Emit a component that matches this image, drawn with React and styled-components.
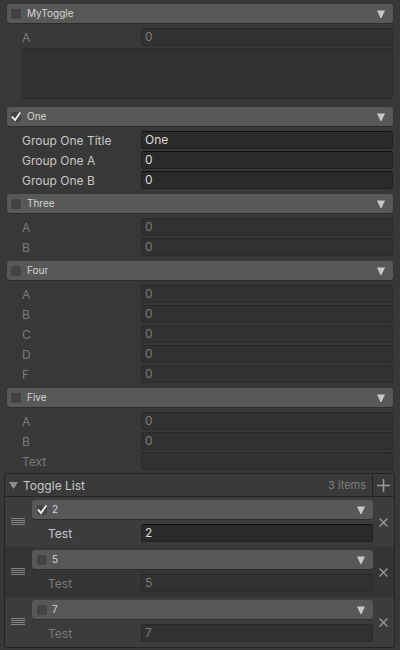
import React from 'react'
import styled, { createGlobalStyle } from "styled-components";

const GlobalStyle = createGlobalStyle`
  html, body {
    margin: 0;
    padding: 0;
    background: #383838;
    font-family: Inter, "Noto Sans", sans-serif;
  }
`;

const Page = styled.div`
  padding: 4px 7px 0 7px;
  width: 400px;
  height: 650px;
  box-sizing: border-box;
  background: #383838;
  overflow: hidden;
`;

const FoldHeader = styled.div`
  display: flex;
  align-items: center;
  height: 19px;
  padding: 0 8px 0 4px;
  background: #585858;
  border-radius: 3px;
  box-shadow: 0 1px 0 #2c2c2c;
`;

const CheckBox = styled.span`
  width: 10px;
  height: 10px;
  border-radius: 2px;
  background: #434343;
  display: flex;
  align-items: center;
  justify-content: center;
  flex-shrink: 0;
`;

const HeaderLabel = styled.span`
  flex: 1;
  margin-left: ${p => p.$gap || 6}px;
  font-size: 10px;
  color: #d4d4d4;
  line-height: 19px;
`;

const Body = styled.div`
  padding: 5px 0 3px 15px;
`;

const Row = styled.div`
  display: flex;
  align-items: center;
  height: 18px;
  margin-bottom: 2px;
`;

const Label = styled.span`
  width: ${p => p.$width || 119}px;
  flex-shrink: 0;
  font-size: 12px;
  color: ${p => (p.$on ? "#c8c8c8" : "#7a7a7a")};
`;

const Field = styled.div`
  flex: 1;
  height: 18px;
  box-sizing: border-box;
  border-radius: 3px;
  padding-left: 3px;
  font-size: 12px;
  line-height: 16px;
  background: ${p => (p.$on ? "#2a2a2a" : "#313131")};
  border: 1px solid ${p => (p.$on ? "#212121" : "#2b2b2b")};
  border-top-color: ${p => (p.$on ? "#0f0f0f" : "#282828")};
  color: ${p => (p.$on ? "#dcdcdc" : "#7c7c7c")};
`;

const TextArea = styled.div`
  height: 51px;
  margin-bottom: 5px;
  box-sizing: border-box;
  border-radius: 3px;
  background: #313131;
  border: 1px solid #2b2b2b;
`;

const ListBox = styled.div`
  margin: -2px -2px 0 -3px;
  border: 1px solid #242424;
  border-radius: 2px;
`;

const ListHeader = styled.div`
  display: flex;
  align-items: center;
  height: 22px;
  border-bottom: 1px solid #242424;
  background: #3a3a3a;
`;

const ListTitle = styled.span`
  flex: 1;
  margin-left: 5px;
  font-size: 12px;
  color: #c8c8c8;
`;

const ItemCount = styled.span`
  font-size: 11px;
  color: #7e7e7e;
  margin-right: 6px;
`;

const AddButton = styled.div`
  width: 21px;
  height: 22px;
  border-left: 1px solid #242424;
  display: flex;
  align-items: center;
  justify-content: center;
`;

const Element = styled.div`
  display: flex;
  height: 50px;
  background: ${p => (p.$alt ? "#353535" : "#3c3c3c")};
`;

const Handle = styled.div`
  width: 27px;
  flex-shrink: 0;
  display: flex;
  align-items: center;
  padding-left: 6px;
  box-sizing: border-box;
`;

const ElementBody = styled.div`
  flex: 1;
  padding-top: 3px;
`;

const InnerHeader = styled(FoldHeader)`
  padding-left: 5px;
  margin-bottom: 5px;
`;

const InnerRow = styled(Row)`
  padding-left: 16px;
`;

const Remove = styled.div`
  width: 21px;
  flex-shrink: 0;
  display: flex;
  align-items: center;
  justify-content: center;
`;

const Check = () => (
  <svg width="10" height="10" viewBox="0 0 10 10">
    <polyline points="1.5,5.2 4,8 8.8,1.2" fill="none" stroke="#f0f0f0" strokeWidth="1.8" strokeLinecap="square" />
  </svg>
);

const DropArrow = () => (
  <svg width="8" height="8" viewBox="0 0 8 8">
    <polygon points="0,0.5 8,0.5 4.5,8 3.5,8" fill="#c8c8c8" />
  </svg>
);

const FoldArrow = () => (
  <svg width="9" height="8" viewBox="0 0 9 8" style={{ marginLeft: 4 }}>
    <polygon points="0,1 9,1 4.5,8" fill="#8e8e8e" />
  </svg>
);

const Plus = () => (
  <svg width="13" height="13" viewBox="0 0 13 13">
    <path d="M6.5 0 V13 M0 6.5 H13" stroke="#9a9a9a" strokeWidth="1.6" />
  </svg>
);

const Cross = () => (
  <svg width="9" height="9" viewBox="0 0 9 9">
    <path d="M0.5 0.5 L8.5 8.5 M8.5 0.5 L0.5 8.5" stroke="#9a9a9a" strokeWidth="1.3" />
  </svg>
);

const Grip = () => (
  <svg width="14" height="8" viewBox="0 0 14 8">
    {[0.5, 2.5, 4.5, 6.5].map(y => (
      <line key={y} x1="0" x2="14" y1={y} y2={y} stroke="#858585" strokeWidth="1" />
    ))}
  </svg>
);

const Header = ({ title, checked }) => (
  <FoldHeader>
    <CheckBox>{checked && <Check />}</CheckBox>
    <HeaderLabel>{title}</HeaderLabel>
    <DropArrow />
  </FoldHeader>
);

const groups = [
  { title: "Three", rows: [["A", "0"], ["B", "0"]] },
  { title: "Four", rows: [["A", "0"], ["B", "0"], ["C", "0"], ["D", "0"], ["F", "0"]] },
  { title: "Five", rows: [["A", "0"], ["B", "0"], ["Text", ""]] },
];

const items = [
  { name: "2", on: true },
  { name: "5", on: false },
  { name: "7", on: false },
];

export default function App() {
  return (
    <Page>
      <GlobalStyle />
      <Header title="MyToggle" />
      <Body>
        <Row>
          <Label>A</Label>
          <Field>0</Field>
        </Row>
        <TextArea />
      </Body>

      <Header title="One" checked />
      <Body>
        <Row>
          <Label $on>Group One Title</Label>
          <Field $on>One</Field>
        </Row>
        <Row>
          <Label $on>Group One A</Label>
          <Field $on>0</Field>
        </Row>
        <Row>
          <Label $on>Group One B</Label>
          <Field $on>0</Field>
        </Row>
      </Body>

      {groups.map(g => (
        <div key={g.title}>
          <Header title={g.title} />
          <Body>
            {g.rows.map(([l, v]) => (
              <Row key={l}>
                <Label>{l}</Label>
                <Field>{v}</Field>
              </Row>
            ))}
          </Body>
        </div>
      ))}

      <ListBox>
        <ListHeader>
          <FoldArrow />
          <ListTitle>Toggle List</ListTitle>
          <ItemCount>3 items</ItemCount>
          <AddButton><Plus /></AddButton>
        </ListHeader>
        {items.map((it, i) => (
          <Element key={it.name} $alt={i === 1}>
            <Handle><Grip /></Handle>
            <ElementBody>
              <InnerHeader>
                <CheckBox>{it.on && <Check />}</CheckBox>
                <HeaderLabel $gap={5}>{it.name}</HeaderLabel>
                <DropArrow />
              </InnerHeader>
              <InnerRow>
                <Label $on={it.on} $width={93}>Test</Label>
                <Field $on={it.on}>{it.name}</Field>
              </InnerRow>
            </ElementBody>
            <Remove><Cross /></Remove>
          </Element>
        ))}
      </ListBox>
    </Page>
  );
}
